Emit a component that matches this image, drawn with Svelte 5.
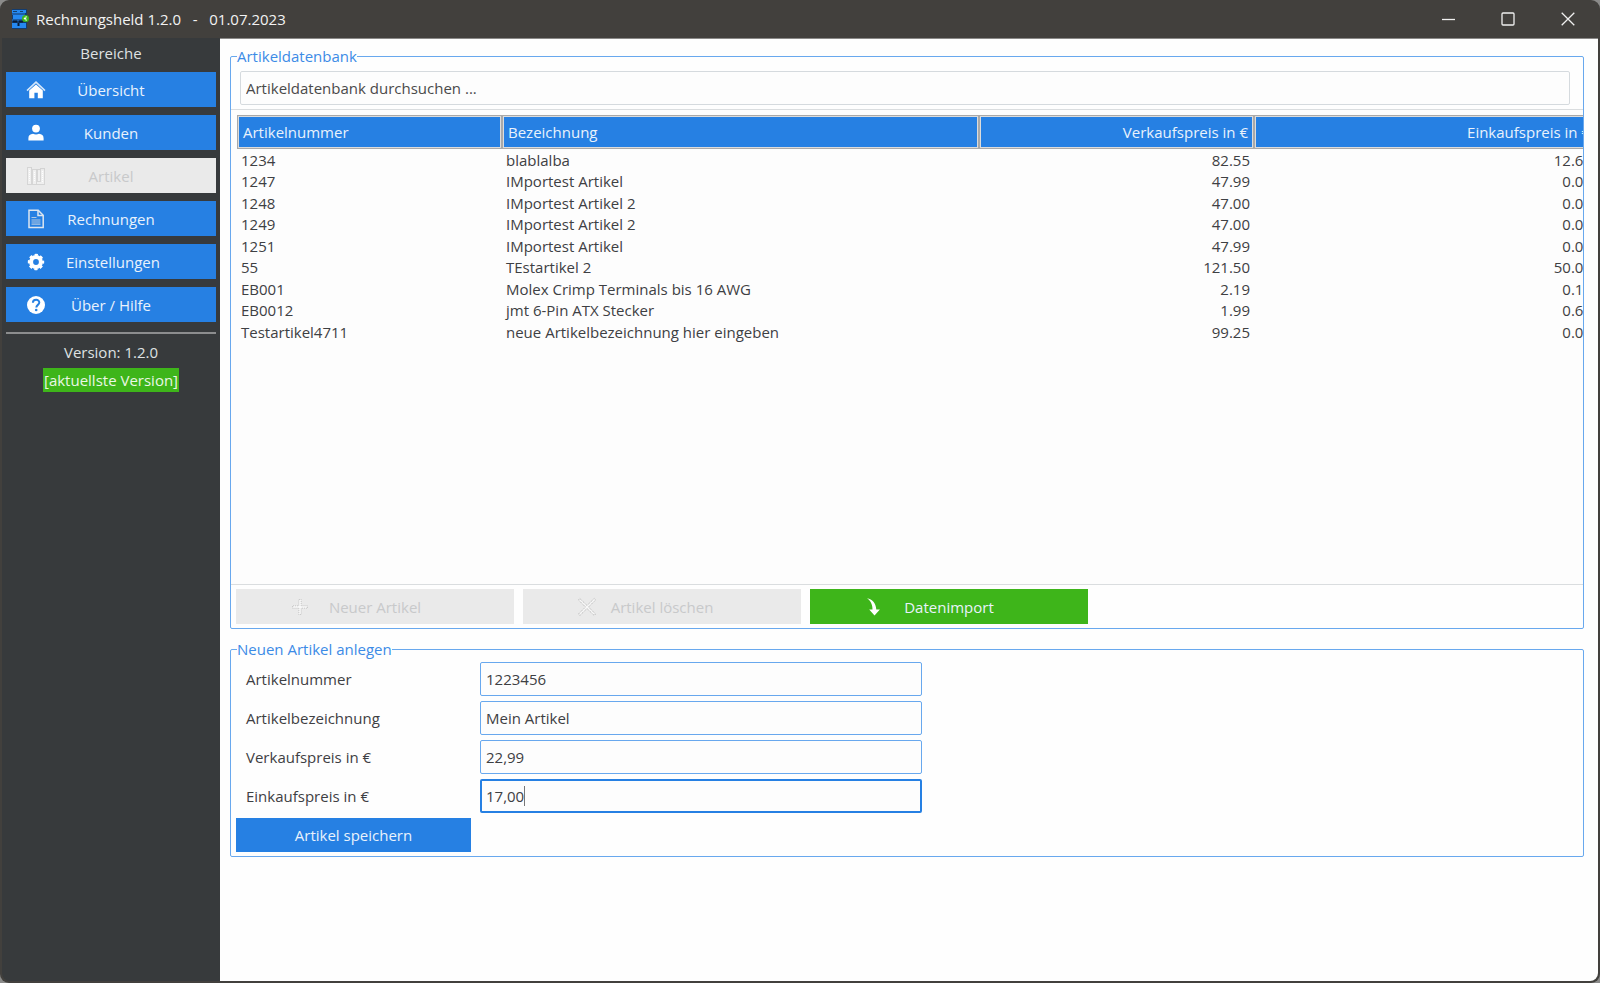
<script lang="ts">
	type Area = { label: string; icon: string };

	const areas: Area[] = [
		{ label: 'Übersicht', icon: 'home' },
		{ label: 'Kunden', icon: 'user' },
		{ label: 'Artikel', icon: 'books' },
		{ label: 'Rechnungen', icon: 'file' },
		{ label: 'Einstellungen', icon: 'gear' },
		{ label: 'Über / Hilfe', icon: 'help' }
	];

	const articles = [
		['1234', 'blablalba', '82.55', '12.60'],
		['1247', 'IMportest Artikel', '47.99', '0.00'],
		['1248', 'IMportest Artikel 2', '47.00', '0.00'],
		['1249', 'IMportest Artikel 2', '47.00', '0.00'],
		['1251', 'IMportest Artikel', '47.99', '0.00'],
		['55', 'TEstartikel 2', '121.50', '50.00'],
		['EB001', 'Molex Crimp Terminals bis 16 AWG', '2.19', '0.10'],
		['EB0012', 'jmt 6-Pin ATX Stecker', '1.99', '0.60'],
		['Testartikel4711', 'neue Artikelbezeichnung hier eingeben', '99.25', '0.00']
	];

	let active = $state('Artikel');
	let search = $state('');
	let number = $state('1223456');
	let title = $state('Mein Artikel');
	let sellPrice = $state('22,99');
	let buyPrice = $state('17,00');
</script>

{#snippet icon(name: string)}
	<svg class="icon" viewBox="0 0 20 20" aria-hidden="true">
		{#if name == 'home'}
			<path d="M1 10.6 10 2.2l9 8.4" fill="none" stroke="#fff" stroke-width="1.6" stroke-opacity=".8" />
			<path d="M3.2 10.6 10 4.4l6.8 6.2v7.6h-5v-5.4H8.4v5.4H3.2z" fill="#fff" />
		{:else if name == 'user'}
			<circle cx="10" cy="5.6" r="3.9" fill="#fff" />
			<path d="M2.4 17.6v-2.4c0-2.8 1.8-4.2 4.6-4.4 1.8 1 4.2 1 6 0 2.8.2 4.6 1.6 4.6 4.4v2.4z" fill="#fff" />
		{:else if name == 'books'}
			<path d="M1 1.5h4v2h5v1h9v14H1z" fill="#efefef" />
			<g fill="none" stroke="#bdbdbd" stroke-dasharray="1 1">
				<path d="M1.5 1.5h4v17h-4zM6.5 3.5h4v15h-4zM11.5 3.5h3v12h-3zM14.5 2.5h4v16h-7" />
				<path d="M3.5 4v12M8.5 6v10M16.5 5v11" stroke="#fff" />
			</g>
		{:else if name == 'file'}
			<path d="M3 1.3h9.2l5 5V18.6H3z" fill="none" stroke="#dde6f0" stroke-width="1.5" />
			<path d="M12 1.5v5h5" fill="none" stroke="#dde6f0" stroke-width="1.5" />
			<path d="M5.5 8.5h5M5.5 11h9M5.5 13h9M5.5 15.2h9" stroke="#b3c9e2" stroke-width="1.2" />
		{:else if name == 'gear'}
			<circle cx="10" cy="10" r="4.9" fill="none" stroke="#fff" stroke-width="4" />
			<circle cx="10" cy="10" r="7.1" fill="none" stroke="#fff" stroke-width="2.2" stroke-dasharray="3.2 2.38" stroke-dashoffset="1.6" />
		{:else if name == 'help'}
			<circle cx="10" cy="10" r="9" fill="#fff" />
			<path d="M6.9 7.8c0-4 6.4-4 6.4-.3 0 2.4-3 2.4-3 5" fill="none" stroke="#2680e3" stroke-width="2" />
			<circle cx="10.2" cy="15" r="1.3" fill="#2680e3" />
		{:else if name == 'plus'}
			<path d="M8.8 2.5h2.4v6.3h6.3v2.4h-6.3v6.3H8.8v-6.3H2.5V8.8h6.3z" fill="#f8f8f8" stroke="#bcbcbc" stroke-width=".9" stroke-dasharray="1 1" />
		{:else if name == 'cross'}
			<path d="m2.8 1.5 7.2 7 7.2-7L18.5 3l-7 7 7 7-1.3 1.5-7.2-7-7.2 7L1.5 17l7-7-7-7z" fill="#f8f8f8" stroke="#b4b4b4" stroke-width=".9" stroke-dasharray="1.4 .8" />
		{:else if name == 'import'}
			<path d="M3 1.2c5.4.8 8.7 4.6 9.3 11.2h3.6l-5.4 6.2-5.3-6.2h3.3C8.6 8 7 4 3 1.2z" fill="#fff" />
		{/if}
	</svg>
{/snippet}

<div class="window">
	<header class="titlebar">
		<svg class="logo" viewBox="0 0 18 20" aria-hidden="true">
			<path d="M1 0h15v20H1z" fill="#123c70" />
			<path d="M1 1h14v3H1zM2 6h13v4H2zM1 14h14v5H1z" fill="#2588f0" />
			<path d="M1 5h13M1 11h10" stroke="#2680e3" />
			<path d="M2 2.5h4M9 2.5h3" stroke="#14406f" />
			<path d="M2 12.5h4M8 12.5h4M7.5 14v3" stroke="#091c35" stroke-width="2" />
			<circle cx="14.5" cy="9.5" r="3.5" fill="#3eb51a" />
			<path d="M16 8c-3-1.2-3 4.2 0 3M12.8 9.5h2.4" fill="none" stroke="#fff" stroke-width=".9" />
		</svg>
		<h1>Rechnungsheld 1.2.0 &nbsp; - &nbsp; 01.07.2023</h1>
		<div class="controls">
			<button aria-label="Minimieren"><svg viewBox="0 0 14 14"><path d="M1 7.5h13" /></svg></button>
			<button aria-label="Maximieren"><svg viewBox="0 0 14 14"><rect x="1" y="1" width="12" height="12" rx="1" /></svg></button>
			<button aria-label="Schließen"><svg viewBox="0 0 14 14"><path d="m.7.7 12.6 12.6M13.3.7.7 13.3" /></svg></button>
		</div>
	</header>

	<div class="body">
		<aside class="sidebar">
			<h2>Bereiche</h2>
			<nav>
				{#each areas as area}
					<button disabled={area.label == active} onclick={() => (active = area.label)}>
						{@render icon(area.icon)}
						<span>{area.label}</span>
					</button>
				{/each}
			</nav>
			<hr />
			<p>Version: 1.2.0</p>
			<p class="latest">[aktuellste Version]</p>
		</aside>

		<main>
			<fieldset class="database">
				<legend>Artikeldatenbank</legend>
				<input class="search" type="text" aria-label="Artikeldatenbank durchsuchen" placeholder="Artikeldatenbank durchsuchen ..." bind:value={search} />
				<div class="list">
					<table>
						<colgroup>
							<col class="colNumber" />
							<col />
							<col class="colSell" />
							<col class="colBuy" />
						</colgroup>
						<thead>
							<tr>
								<th>Artikelnummer</th>
								<th>Bezeichnung</th>
								<th class="price">Verkaufspreis in €</th>
								<th class="price">Einkaufspreis in €</th>
							</tr>
						</thead>
						<tbody>
							{#each articles as [nr, name, sell, buy]}
								<tr>
									<td>{nr}</td>
									<td>{name}</td>
									<td class="price">{sell}</td>
									<td class="price">{buy}</td>
								</tr>
							{/each}
						</tbody>
					</table>
				</div>
				<div class="actions">
					<button disabled>{@render icon('plus')}<span>Neuer Artikel</span></button>
					<button disabled>{@render icon('cross')}<span>Artikel löschen</span></button>
					<button class="import">{@render icon('import')}<span>Datenimport</span></button>
				</div>
			</fieldset>

			<fieldset class="create">
				<legend>Neuen Artikel anlegen</legend>
				<form onsubmit={(e) => e.preventDefault()}>
					<label for="number">Artikelnummer</label>
					<input id="number" type="text" bind:value={number} />
					<label for="title">Artikelbezeichnung</label>
					<input id="title" type="text" bind:value={title} />
					<label for="sell">Verkaufspreis in €</label>
					<input id="sell" type="text" bind:value={sellPrice} />
					<label for="buy">Einkaufspreis in €</label>
					<div class="current">
						<input id="buy" type="text" bind:value={buyPrice} />
						<span class="caret"></span>
					</div>
					<button class="save">Artikel speichern</button>
				</form>
			</fieldset>
		</main>
	</div>
</div>

<style>
	:global(body) {
		margin: 0;
		background: #8b8b8a;
	}

	* {
		box-sizing: border-box;
	}

	.window {
		--blue: #2680e3;
		--green: #3eb51a;
		--line: #68a8ee;
		min-height: 100vh;
		display: flex;
		flex-direction: column;
		padding: 0 2px 2px;
		background: #42403d;
		border-radius: 9px;
		overflow: hidden;
		font: 15px/20px 'Open Sans', 'Noto Sans', sans-serif;
		color: #3e4043;
	}

	button,
	input {
		font: inherit;
		color: inherit;
		margin: 0;
		border-radius: 0;
	}

	button {
		border: none;
		padding: 0;
		background: var(--blue);
		color: #e9f2fc;
	}

	button:disabled {
		background: #eaeaea;
		color: #c8c9ca;
	}

	.icon {
		width: 20px;
		height: 20px;
	}

	.titlebar {
		display: flex;
		align-items: center;
		height: 38px;
		padding-left: 9px;
		color: #f3f3f3;
	}

	.logo {
		width: 18px;
		height: 20px;
	}

	h1 {
		margin: 0 0 0 7px;
		font: inherit;
	}

	.controls {
		display: flex;
		align-self: stretch;
		margin-left: auto;
	}

	.controls button {
		width: 60px;
		background: none;
	}

	.controls svg {
		display: block;
		width: 14px;
		height: 14px;
		margin: auto;
		fill: none;
		stroke: #f0f0f0;
		stroke-width: 1.3;
	}

	.body {
		flex: 1;
		display: flex;
	}

	.sidebar {
		width: 218px;
		flex: none;
		padding: 5px 4px;
		background: #373a3c;
		border-radius: 0 0 0 8px;
		color: #dfe1e2;
		text-align: center;
	}

	h2 {
		margin: 0 0 9px;
		font: inherit;
	}

	nav {
		display: flex;
		flex-direction: column;
		gap: 8px;
	}

	nav button {
		display: grid;
		grid-template-columns: 60px 1fr 60px;
		align-items: center;
		justify-items: center;
		height: 35px;
	}

	hr {
		height: 2px;
		margin: 10px 0 8px;
		border: none;
		background: #8c8d8e;
	}

	p {
		margin: 0;
	}

	.latest {
		width: fit-content;
		margin: 6px auto 0;
		padding: 2px 1px;
		background: var(--green);
		color: #eaf7e5;
	}

	main {
		flex: 1;
		min-width: 0;
		padding: 7px 14px 0 10px;
		background: #fefefe;
		border-top: 1px solid #8a8988;
		border-radius: 0 0 8px 0;
	}

	fieldset {
		min-width: 0;
		margin: 0 0 10px;
		padding: 5px 0 4px;
		border: 1px solid var(--line);
		border-radius: 2px;
	}

	legend {
		margin-left: 6px;
		padding: 0;
		color: #3c8be6;
	}

	input {
		width: 100%;
		height: 34px;
		padding: 0 5px;
		background: #fdfdfd;
		border: 1px solid var(--line);
		border-radius: 2px;
		outline: none;
	}

	.search {
		display: block;
		width: calc(100% - 22px);
		margin: 0 13px 4px 9px;
		border-color: #d5dade;
	}

	.search::placeholder {
		color: #4a4a4a;
		opacity: 1;
	}

	.list {
		min-height: 476px;
		padding: 5px 0 0 6px;
		background: #fdfdfd;
		border: 1px solid #dadddf;
		border-width: 1px 0;
		overflow: hidden;
	}

	/* last column runs past the right edge of the list */
	table {
		width: calc(100% + 13px);
		table-layout: fixed;
		border-collapse: separate;
		border-spacing: 0;
	}

	.colNumber {
		width: 265px;
	}

	.colSell {
		width: 275px;
	}

	.colBuy {
		width: 342px;
	}

	th {
		height: 34px;
		padding: 0 5px;
		background: var(--blue);
		border: 1px solid #a9a9a9;
		box-shadow: inset 0 0 0 1px #dcdcdc;
		color: #e9f2fc;
		font-weight: normal;
		text-align: left;
	}

	td {
		height: 21px;
		padding: 0 4px;
		white-space: nowrap;
	}

	tr:nth-child(even) td {
		height: 22px;
	}

	.price {
		text-align: right;
	}

	.actions {
		display: flex;
		gap: 9px;
		margin: 4px 5px 0;
	}

	.actions button {
		display: grid;
		grid-template-columns: 74px 1fr 74px;
		align-items: center;
		justify-items: center;
		width: 278px;
		height: 35px;
	}

	.actions .icon {
		justify-self: end;
	}

	.actions .import {
		background: var(--green);
	}

	.create {
		padding-top: 3px;
	}

	form {
		display: grid;
		grid-template-columns: 235px 442px;
		column-gap: 9px;
		row-gap: 5px;
		align-items: center;
		margin-left: 5px;
	}

	label {
		padding-left: 10px;
	}

	.current {
		position: relative;
	}

	.current input {
		display: block;
		padding: 0 4px;
		border: 2px solid var(--blue);
		caret-color: transparent;
	}

	.caret {
		position: absolute;
		top: 7px;
		left: 44px;
		width: 1px;
		height: 20px;
		background: #777;
	}

	.save {
		height: 34px;
	}
</style>
